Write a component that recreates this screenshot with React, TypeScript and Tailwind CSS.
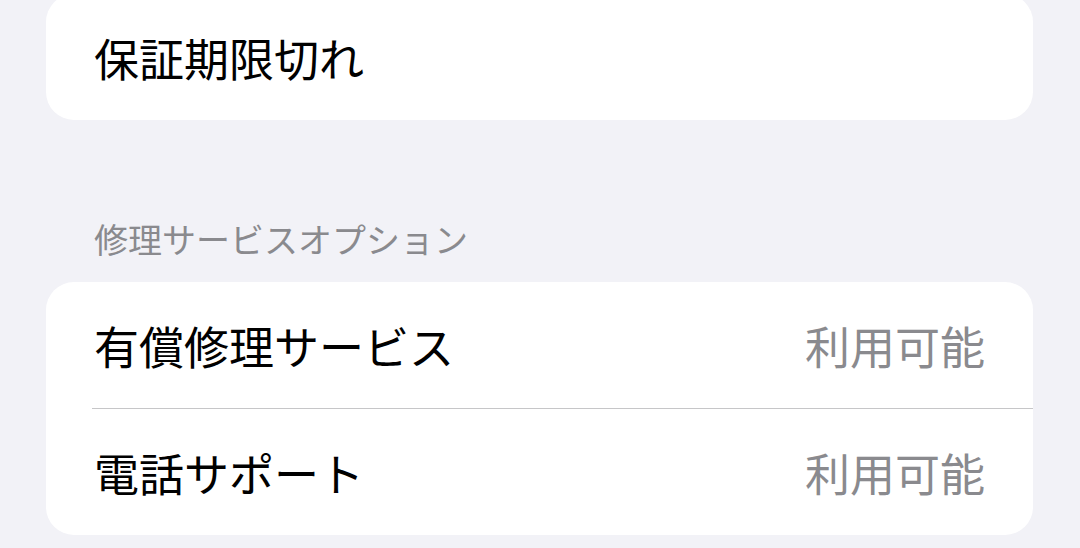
import type { ReactNode } from 'react';

const font = { fontFamily: '"Noto Sans CJK JP", "Noto Sans", sans-serif' };

function Row({ label, value, divider }: { label: string; value?: string; divider?: boolean }) {
  return (
    <div>
      {divider && <div className="ml-[46px] h-px bg-[#c6c6c8]" />}
      <div className="flex h-[126px] items-center justify-between pl-[48px] pr-[48px]">
        <span className="text-[45px] leading-none text-black">{label}</span>
        {value && <span className="text-[45px] leading-none text-[#8a8a8e]">{value}</span>}
      </div>
    </div>
  );
}

function Card({ children, className = '' }: { children: ReactNode; className?: string }) {
  return <div className={`overflow-hidden rounded-[28px] bg-white ${className}`}>{children}</div>;
}

export default function App() {
  return (
    <main className="h-[548px] w-[1080px] overflow-hidden bg-[#f2f2f7] px-[46px]" style={font}>
      <Card className="mt-[-6px] w-[987px]">
        <Row label="保証期限切れ" />
      </Card>
      <div className="pl-[48px] pt-[98px] pb-[22px] text-[34px] leading-[42px] text-[#8a8a8e]">
        修理サービスオプション
      </div>
      <Card className="w-[987px]">
        <Row label="有償修理サービス" value="利用可能" />
        <Row label="電話サポート" value="利用可能" divider />
      </Card>
    </main>
  );
}
